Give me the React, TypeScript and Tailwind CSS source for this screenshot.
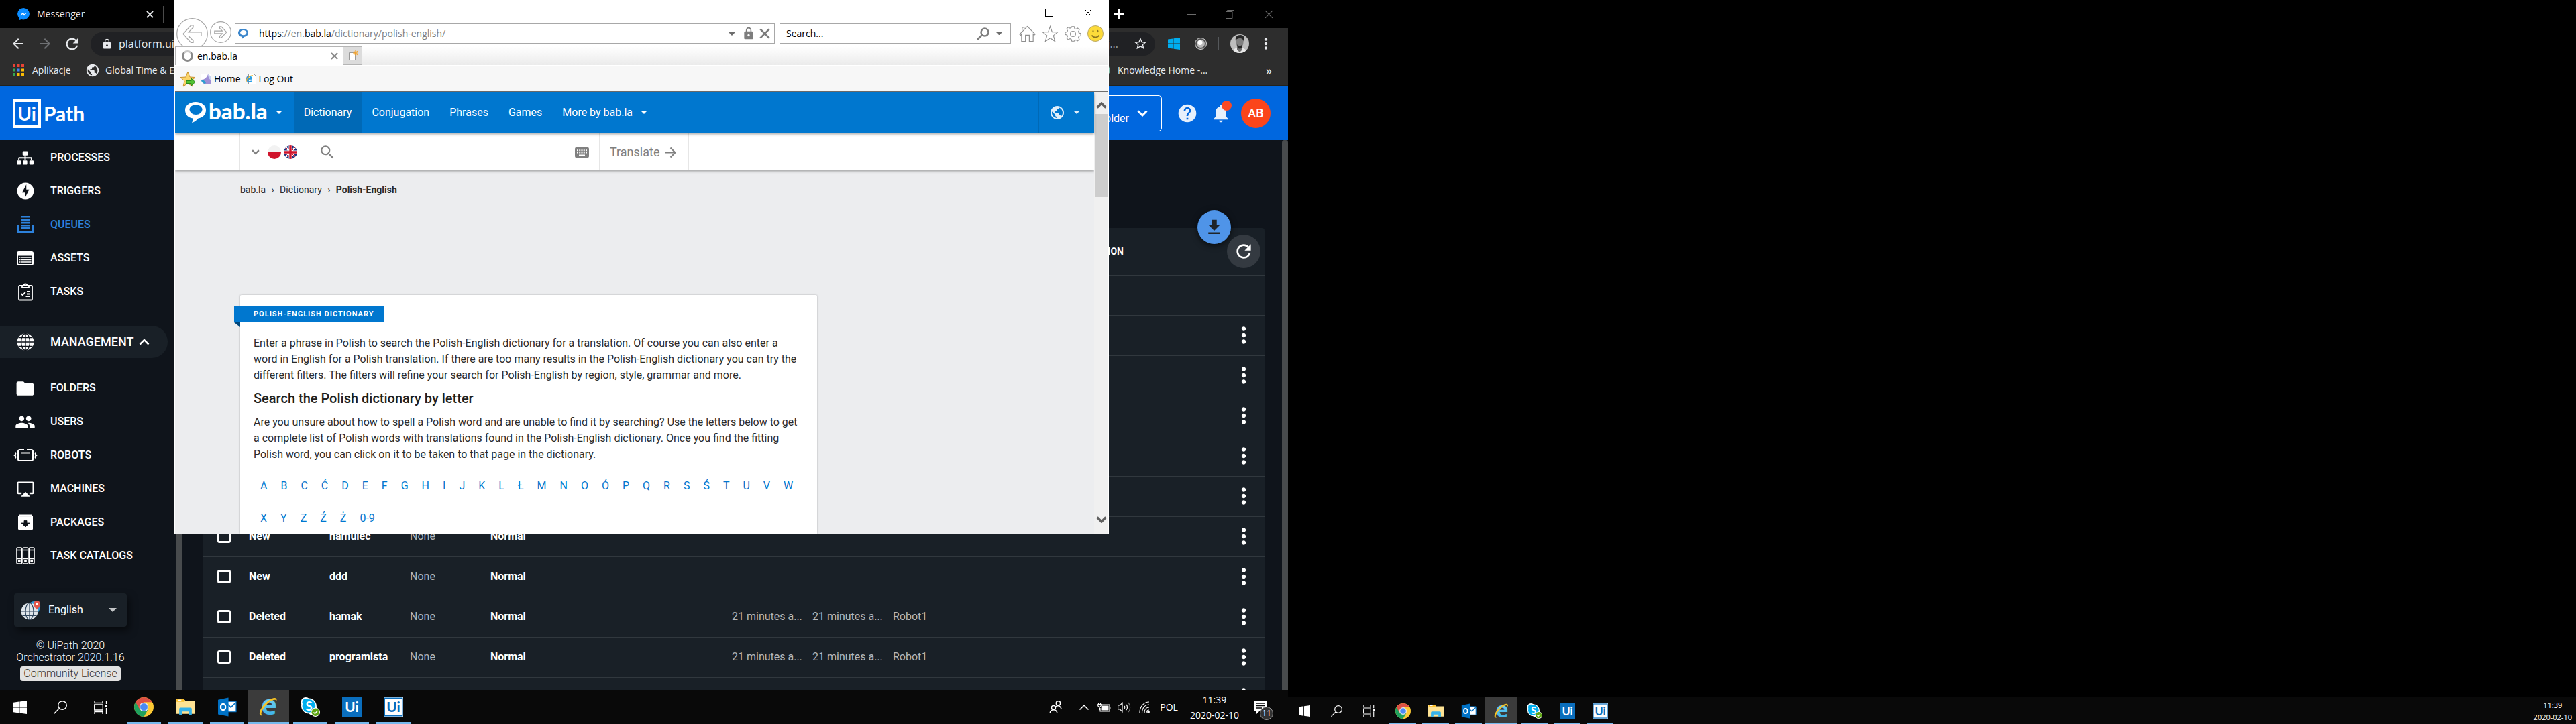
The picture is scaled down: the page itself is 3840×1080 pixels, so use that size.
import React from "react";
import type { ReactNode } from "react";
import {
  MdAirplay,
  MdArrowBack,
  MdArrowForward,
  MdFileDownload,
  MdFolder,
  MdHelp,
  MdLock,
  MdMoreVert,
  MdNotifications,
  MdOfflineBolt,
  MdPeople,
  MdPublic,
  MdRefresh,
  MdSearch,
  MdStarBorder,
} from "react-icons/md";
import { FaSitemap } from "react-icons/fa";

const SEGOE = "font-['Open_Sans','Noto_Sans',sans-serif]";
const ROBOTO = "font-['Roboto',sans-serif]";

/* ---------- icons ---------- */

function Chevron({ className, up, w = 3 }: { className: string; up?: boolean; w?: number }) {
  return (
    <svg viewBox="0 0 16 10" className={className} fill="none" stroke="currentColor" strokeWidth={w}>
      <path d={up ? "M1.5 8.5 8 2l6.5 6.5" : "M1.5 1.5 8 8l6.5-6.5"} />
    </svg>
  );
}

function Caret({ className }: { className: string }) {
  return (
    <svg viewBox="0 0 12 6" className={className} fill="currentColor">
      <path d="M0 0h12L6 6z" />
    </svg>
  );
}

function Cross({ className, w = 2 }: { className: string; w?: number }) {
  return (
    <svg viewBox="0 0 12 12" className={className} fill="none" stroke="currentColor" strokeWidth={w}>
      <path d="M1 1l10 10M11 1 1 11" />
    </svg>
  );
}

function QueueIcon() {
  return (
    <svg viewBox="0 0 28 28" className="size-7" fill="currentColor">
      <path d="M7 1h14v2.6H7zM7 5.4h14V8H7zM7 9.8h14v2.6H7zM7 14h14v2.6H7zM7 18h14v2.6H7z" />
      <path d="M1 15h3v9h20v-9h3v12H1z" />
    </svg>
  );
}

function AssetIcon() {
  return (
    <svg viewBox="0 0 25 21" className="w-[25px]" fill="none" stroke="currentColor">
      <rect x="1" y="1" width="23" height="19" rx="2" strokeWidth="2" />
      <path d="M1 1.5h23V6H1z" fill="currentColor" />
      <path d="M3.5 9h2M7 9h14.500M3.500 12.500h2M7 12.500h14.500M3.500 16h2M7 16h14.500" strokeWidth="1.500" />
    </svg>
  );
}

function TaskIcon() {
  return (
    <svg viewBox="0 0 24 27" className="w-6" fill="none" stroke="currentColor" strokeWidth="1.8">
      <rect x="2" y="4" width="20" height="21.500" rx="1.500" />
      <path d="M7 7h10V4h-2.500a2.500 2.500 0 0 0-5 0H7z" />
      <path d="M5.500 16l2.200 2.200L12 13.500M14 13h5M14 16.500h5M12.500 20H19" />
    </svg>
  );
}

function GlobeGrid({ className, fill = "#fff", line = "#0f141b" }: { className: string; fill?: string; line?: string }) {
  return (
    <svg viewBox="0 0 26 26" className={className} fill="none" stroke={line} strokeWidth="1.300">
      <circle cx="13" cy="13" r="12.500" fill={fill} stroke="none" />
      <ellipse cx="13" cy="13" rx="6.500" ry="12.500" />
      <path d="M13 0v26M0 13h26M2.500 6.500h21M2.500 19.500h21" />
    </svg>
  );
}

function RobotIcon() {
  return (
    <svg viewBox="0 0 36 20" className="w-9" fill="none" stroke="currentColor" strokeWidth="2.200">
      <path d="M16 2h-6.500A2.500 2.500 0 0 0 7 4.500v11A2.500 2.500 0 0 0 9.500 18h17a2.500 2.500 0 0 0 2.500-2.500v-11A2.500 2.500 0 0 0 26.500 2H20" />
      <path d="M12 6.500h12M4 6c-1 .5-.7 2-1.100 3-.2.600-.9 1-.9 1s.700.400.900 1c.400 1 .1 2.500 1.100 3M32 6c1 .5.7 2 1.100 3 .2.600.9 1 .9 1s-.7.400-.9 1c-.400 1-.1 2.500-1.100 3" />
    </svg>
  );
}

function PackageIcon() {
  return (
    <svg viewBox="0 0 24 24" className="size-6">
      <path d="M3 .5h18l2 2.500v18.500A2 2 0 0 1 21 23.500H3a2 2 0 0 1-2-2V3z" fill="#fff" />
      <path d="M3.500 2.600h17M10 9.500h4v3.500h4l-6 6-6-6h4z" fill="#0f141b" stroke="#0f141b" strokeWidth=".8" />
    </svg>
  );
}

function CatalogIcon() {
  return (
    <svg viewBox="0 0 28 26" className="w-7" fill="none" stroke="currentColor" strokeWidth="1.600">
      {[1, 10.200, 19.400].map((x) => (
        <g key={x}>
          <rect x={x} y="1" width="7.600" height="24" rx="1.500" />
          <path d={`M${x} 4.500h7.600M${x} 17.500h7.600`} />
          <circle cx={x + 3.800} cy="21" r="1.200" fill="currentColor" />
        </g>
      ))}
    </svg>
  );
}

function TravelGlobe() {
  return (
    <svg viewBox="0 0 30 30" className="size-[30px]">
      <path d="M13 5C20-1 30 2 29 10c-1 7-4 10-7 12z" fill="#2a9bdc" />
      <circle cx="13" cy="17" r="12.500" fill="#dfe5ea" />
      <g fill="none" stroke="#31475e" strokeWidth="1.200">
        <ellipse cx="13" cy="17" rx="6" ry="12.500" />
        <path d="M13 4.500v25M.5 17h25M2.500 10.500h21M2.500 23.500h21" />
      </g>
      <path d="M24 1a5 5 0 0 1 5 5c0 4-5 8.500-5 8.500S19 10 19 6a5 5 0 0 1 5-5z" fill="#e2574c" />
      <circle cx="24" cy="6" r="2" fill="#fff" />
    </svg>
  );
}

function WindowsLogo({ className }: { className: string }) {
  return (
    <svg viewBox="0 0 20 20" className={className} fill="currentColor">
      <path d="M0 2.800 8.400 1.600V9.500H0zM9.400 1.500 20 0v9.500H9.400zM0 10.500h8.400v7.900L0 17.200zM9.400 10.500H20V20L9.400 18.500z" />
    </svg>
  );
}

function SearchLoop({ className }: { className: string }) {
  return (
    <svg viewBox="0 0 20 20" className={className} fill="none" stroke="currentColor" strokeWidth="1.400">
      <circle cx="13" cy="7" r="6.300" />
      <path d="M8.500 11.500.5 19.500" />
    </svg>
  );
}

function TaskView({ className }: { className: string }) {
  return (
    <svg viewBox="0 0 20 20" className={className} fill="none" stroke="currentColor" strokeWidth="1.300">
      <path d="M1 0v3.500h12V0M1 20v-3.500h12V20M.7 6h12.600v8H.7zM18.500 0v5M18.500 11v9" />
      <path d="M17 6h3v3.500h-3z" fill="currentColor" stroke="none" />
    </svg>
  );
}

function ChromeLogo({ className }: { className: string }) {
  return (
    <svg viewBox="0 0 28 28" className={className}>
      <circle cx="14" cy="14" r="14" fill="#fcc934" />
      <path d="M14 14 1.900 7A14 14 0 0 0 14 28l6-10.500z" fill="#1fa15d" />
      <path d="M1.900 7A14 14 0 0 1 26.100 7H14L8 17.500z" fill="#dd5144" />
      <circle cx="14" cy="14" r="6.600" fill="#f1f1f1" />
      <circle cx="14" cy="14" r="5.300" fill="#4a8af4" />
    </svg>
  );
}

function ExplorerLogo({ className }: { className: string }) {
  return (
    <svg viewBox="0 0 28 28" className={className}>
      <path d="M0 3h12l2 2.500h14V24H0z" fill="#ffe394" />
      <path d="M1 2.500h10.500L14 5l-2 1.500H1z" fill="#fbc02d" />
      <path d="M3 3.500h5v1.500H3z" fill="#fff" />
      <path d="M5 25.500V17a2 2 0 0 1 2-2h14a2 2 0 0 1 2 2v8.500h-4.500v-5h-9v5z" fill="#35b2ea" />
    </svg>
  );
}

function OutlookLogo({ className }: { className: string }) {
  return (
    <svg viewBox="0 0 28 28" className={className}>
      <path d="M14 6h13v15H14z" fill="#fff" stroke="#0072c6" strokeWidth="1.200" />
      <path d="M15.500 10.500l4 4 7-7" fill="none" stroke="#0072c6" strokeWidth="1.600" />
      <path d="M1 3.500 16 .5v27L1 24.500z" fill="#0072c6" />
      <ellipse cx="8.300" cy="14" rx="3.500" ry="4.500" fill="none" stroke="#fff" strokeWidth="2.200" />
    </svg>
  );
}

function IeLogo({ className }: { className: string }) {
  return (
    <svg viewBox="0 0 28 28" overflow="visible" className={className}>
      <defs>
        <linearGradient id="ie-blue" x1="0" y1="0" x2="0" y2="1">
          <stop offset="0" stopColor="#8fe3fb" />
          <stop offset="1" stopColor="#29a5e3" />
        </linearGradient>
      </defs>
      <text x="3" y="25.500" fontSize="39" fontWeight="700" fontFamily="Open Sans" fill="url(#ie-blue)">e</text>
      <path d="M5 26C-1 28 0 20 5 13.500 11 5 22-1.500 25 2c1 1.200.6 3-.2 4.600.1-1.600 0-2.600-1.300-2.900C19 3 11 9 6.500 16 3 21.500 2.500 25 5 26z" fill="#f7c325" />
    </svg>
  );
}

function SkypeLogo({ className }: { className: string }) {
  return (
    <svg viewBox="0 0 28 28" className={className}>
      <circle cx="7.500" cy="7" r="7" fill="#fff" />
      <circle cx="17" cy="18" r="7.500" fill="#fff" />
      <circle cx="12" cy="12.500" r="11" fill="#fff" />
      <circle cx="12" cy="12.500" r="9.500" fill="#00aff0" />
      <circle cx="7.500" cy="7" r="5" fill="#00aff0" />
      <text x="12.200" y="19" fontSize="18" fontWeight="700" fontFamily="Lato" textAnchor="middle" fill="#fff">S</text>
      <circle cx="21.500" cy="21.500" r="6.500" fill="#fff" />
      <circle cx="21.500" cy="21.500" r="5.600" fill="#5fa614" />
      <path d="M18.800 21.700l1.900 1.900 3.500-3.800" fill="none" stroke="#fff" strokeWidth="1.400" />
    </svg>
  );
}

function UiLogo({ className, light }: { className: string; light?: boolean }) {
  return (
    <svg viewBox="0 0 28 28" className={className}>
      <rect width="28" height="28" fill={light ? "#fff" : "#0a6ebd"} />
      {light && <rect x="1.200" y="1.200" width="25.600" height="25.600" fill="none" stroke="#0a6ebd" strokeWidth="1.500" />}
      <text x="14" y="21.500" fontSize="20" fontWeight="700" fontFamily="Lato" textAnchor="middle" fill={light ? "#0a6ebd" : "#fff"}>Ui</text>
    </svg>
  );
}

function Bubble({ className, hole }: { className: string; hole: string }) {
  return (
    <svg viewBox="0 0 31 31" className={className}>
      <path d="M15.500 0C24.500 0 31 5 31 12s-5 11.500-11.500 12.500C17 27 15 29.500 10 31c1-2 1.700-4 1.500-6.500C5 24 0 19 0 12S7 0 15.500 0z" fill="currentColor" />
      <ellipse cx="16" cy="11.500" rx="9.500" ry="7.500" fill={hole} />
    </svg>
  );
}

function Flag({ kind }: { kind: "pl" | "uk" }) {
  return (
    <svg viewBox="0 0 20 20" className="size-5">
      <clipPath id={`flag-${kind}`}>
        <circle cx="10" cy="10" r="10" />
      </clipPath>
      <g clipPath={`url(#flag-${kind})`}>
        {kind === "pl" ? (
          <>
            <path d="M0 0h20v10H0z" fill="#f2f2f2" />
            <path d="M0 10h20v10H0z" fill="#d0142c" />
          </>
        ) : (
          <>
            <path d="M0 0h20v20H0z" fill="#1c2f7c" />
            <path d="M0 0l20 20M20 0 0 20" stroke="#fff" strokeWidth="2.500" />
            <path d="M0 0l20 20M20 0 0 20" stroke="#d0142c" strokeWidth="1" />
            <path d="M10 0v20M0 10h20" stroke="#fff" strokeWidth="5" />
            <path d="M10 0v20M0 10h20" stroke="#d0142c" strokeWidth="3.400" />
          </>
        )}
      </g>
    </svg>
  );
}

/* ---------- Chrome window with Orchestrator ---------- */

const ICON = "size-[26px]";

const mainMenu: { label: string; icon: ReactNode; active?: boolean }[] = [
  { label: "PROCESSES", icon: <FaSitemap className="size-[25px]" /> },
  { label: "TRIGGERS", icon: <MdOfflineBolt className="size-[30px]" /> },
  { label: "QUEUES", icon: <QueueIcon />, active: true },
  { label: "ASSETS", icon: <AssetIcon /> },
  { label: "TASKS", icon: <TaskIcon /> },
];

const managementMenu: { label: string; icon: ReactNode; active?: boolean }[] = [
  { label: "FOLDERS", icon: <MdFolder className="size-[31px]" /> },
  { label: "USERS", icon: <MdPeople className="size-[31px]" /> },
  { label: "ROBOTS", icon: <RobotIcon /> },
  { label: "MACHINES", icon: <MdAirplay className="size-[28px]" /> },
  { label: "PACKAGES", icon: <PackageIcon /> },
  { label: "TASK CATALOGS", icon: <CatalogIcon /> },
];

function MenuList({ items }: { items: typeof mainMenu }) {
  return (
    <ul>
      {items.map((m) => (
        <li key={m.label}>
          <a href="#" className={`flex h-[50px] items-center text-base font-medium ${m.active ? "text-[#2d82dc]" : "text-white"}`}>
            <span className="flex w-[75px] justify-center">{m.icon}</span>
            {m.label}
          </a>
        </li>
      ))}
    </ul>
  );
}

function Sidebar() {
  return (
    <aside className="w-[262px] shrink-0">
      <nav className="pt-px">
        <MenuList items={mainMenu} />
        <button className="mt-[26px] flex h-12 w-[250px] items-center rounded-r-full bg-[#192027] text-lg font-medium text-white">
          <span className="flex w-[75px] justify-center">
            <GlobeGrid className={ICON} />
          </span>
          MANAGEMENT
          <Chevron className="ml-2 w-4" up w={2.500} />
        </button>
        <div className="mt-5">
          <MenuList items={managementMenu} />
        </div>
      </nav>
      <div className="ml-[21px] w-[168px] text-center text-base leading-[18px] font-light text-white">
        <div className="mt-[31px] flex h-[50px] items-center rounded-[4px] bg-[#192027] pr-[15px] pl-[10px] shadow-[4px_6px_12px_#0008]">
          <TravelGlobe />
          <select aria-label="Language" className="ml-[11px] flex-1 appearance-none bg-transparent font-normal outline-none">
            <option>English</option>
          </select>
          <Caret className="w-3 text-[#c2c4c6]" />
        </div>
        <p className="mt-[19px]">© UiPath 2020</p>
        <p className="-mx-3">Orchestrator 2020.1.16</p>
        <p className="mx-auto mt-1 w-[150px] rounded-[4px] bg-[#e2e2e2] leading-[22px] whitespace-nowrap text-[#333]">Community License</p>
      </div>
    </aside>
  );
}

const dataRows: string[][] = [
  ["", "", "", "", "", "", ""],
  ["", "", "", "", "", "", ""],
  ["", "", "", "", "", "", ""],
  ["", "", "", "", "", "", ""],
  ["", "", "", "", "", "", ""],
  ["New", "hamulec", "None", "Normal", "", "", ""],
  ["New", "ddd", "None", "Normal", "", "", ""],
  ["Deleted", "hamak", "None", "Normal", "21 minutes a...", "21 minutes a...", "Robot1"],
  ["Deleted", "programista", "None", "Normal", "21 minutes a...", "21 minutes a...", "Robot1"],
  ["", "", "", "", "", "", ""],
];

function QueueTable() {
  return (
    <div className="relative rounded-t-[4px] bg-[#192027]">
      <table className="w-full table-fixed border-collapse text-base whitespace-nowrap text-[#b4b7ba]">
        <colgroup>
          <col className="w-[68px]" />
          <col className="w-[120px]" />
          <col className="w-[120px]" />
          <col className="w-[120px]" />
          <col className="w-[360px]" />
          <col className="w-[120px]" />
          <col className="w-[120px]" />
          <col className="w-[120px]" />
          <col className="w-[224px]" />
          <col />
          <col className="w-[62px]" />
        </colgroup>
        <thead>
          <tr className="h-[70px] border-b border-[#31383e]">
            <th colSpan={8} />
            <th className="text-right text-sm font-bold text-white">EXCEPTION</th>
            <th colSpan={2} />
          </tr>
        </thead>
        <tbody>
          <tr className="h-[60px] border-b border-[#31383e]">
            <td colSpan={11} />
          </tr>
          {dataRows.map((r, i) => (
            <tr key={i} className="h-[60px] border-b border-[#31383e]">
              <td className="pl-[21px]">
                <input
                  type="checkbox"
                  aria-label="Select row"
                  className="block size-5 appearance-none rounded-[3px] border-[3px] border-white"
                />
              </td>
              {r.map((c, j) => (
                <td key={j} className={j < 4 && j !== 2 ? "font-bold text-white" : ""}>
                  {c}
                </td>
              ))}
              <td />
              <td />
              <td className="text-white">
                <button aria-label="More actions" className="mx-auto block">
                  <MdMoreVert className="size-[38px]" />
                </button>
              </td>
            </tr>
          ))}
        </tbody>
      </table>
      <button aria-label="Export" className="absolute -top-[26px] right-[50px] flex size-[50px] items-center justify-center rounded-full bg-[#4f94e8] text-[#1f2429] shadow-[0_2px_10px_#000a]">
        <MdFileDownload className="size-[30px]" />
      </button>
      <button aria-label="Refresh" className="absolute top-[10px] right-[6px] flex size-[50px] items-center justify-center rounded-full bg-[#343a41] text-white">
        <MdRefresh className="size-8" />
      </button>
    </div>
  );
}

function ChromeWindow() {
  return (
    <section className="flex min-h-0 flex-1 flex-col overflow-hidden bg-[#0f141b]">
      <div className={`flex h-[42px] shrink-0 items-center bg-black pr-[22px] pl-[26px] text-sm text-[#e8eaed] ${SEGOE}`}>
        <svg viewBox="0 0 18 18" className="mr-[11px] size-[18px]">
          <path d="M9 0a9 9 0 0 1 9 8.700A9 9 0 0 1 9 17.400c-1 0-2-.2-3-.5L3 18v-2.800A8.700 8.700 0 0 1 0 8.700 9 9 0 0 1 9 0z" fill="#0a8cff" />
          <path d="M3.500 11.500 8 6.800l2.300 2.200 4.200-2.300-4.500 4.700-2.300-2.200z" fill="#fff" />
        </svg>
        Messenger
        <span className="flex w-[118px] justify-end">
          <button aria-label="Close tab" className="mr-[14px] ml-auto">
            <Cross className="size-[11px]" />
          </button>
          <span className="h-[25px] w-px bg-[#4a4a4a]" />
        </span>
        <span className="ml-auto flex items-center text-[#6b6b6b]">
          <button aria-label="New tab" className="mr-[95px] text-white">
            <svg viewBox="0 0 14 14" className="size-[14px]" stroke="currentColor" strokeWidth="2.500">
              <path d="M7 0v14M0 7h14" />
            </svg>
          </button>
          <button aria-label="Minimize" className="mr-11 h-px w-[13px] bg-[#6b6b6b]" />
          <button aria-label="Restore" className="mr-[45px]">
            <svg viewBox="0 0 13 13" className="size-[13px]" fill="none" stroke="currentColor">
              <path d="M.5 2.500h9.500v10H.5zM2.500 2.500v-2h10v10H10" />
            </svg>
          </button>
          <button aria-label="Close">
            <Cross className="size-[13px]" w={1} />
          </button>
        </span>
      </div>
      <div className={`flex h-[87px] shrink-0 flex-col border-b-2 border-[#23221c] bg-[#2d2d2d] text-sm text-[#e8eaed] ${SEGOE}`}>
        <div className="flex h-[46px] items-center pr-5 pl-[15px]">
          <button aria-label="Back"><MdArrowBack className="size-6" /></button>
          <button aria-label="Forward" className="ml-4 text-[#6f7174]"><MdArrowForward className="size-6" /></button>
          <button aria-label="Reload" className="ml-[15px]"><MdRefresh className="size-[27px]" /></button>
          <div className="ml-[14px] flex h-[35px] flex-1 items-center rounded-full bg-[#202124] pr-[11px] pl-4">
            <MdLock className="mr-[9px] size-[17px]" />
            <span className="text-base">platform.uipath.com</span>
            <span className="ml-auto text-base text-[#9aa0a6]">Aj...</span>
            <MdStarBorder className="ml-[22px] size-[22px]" />
          </div>
          <WindowsLogo className="ml-[19px] size-[18px] text-[#00adef]" />
          <svg viewBox="0 0 18 18" className="ml-[22px] size-[18px]">
            <circle cx="9" cy="9" r="8.500" fill="#555" stroke="#ddd" />
            <circle cx="9" cy="9" r="6" fill="#bbb" />
            <circle cx="8" cy="7.500" r="3.500" fill="#fff" />
          </svg>
          <span className="mx-[17px] h-5 w-px bg-[#55585b]" />
          <svg viewBox="0 0 28 28" className="size-7">
            <clipPath id="avatar"><circle cx="14" cy="14" r="14" /></clipPath>
            <g clipPath="url(#avatar)">
              <path d="M0 0h28v28H0z" fill="#bdbdbd" />
              <path d="M3 28c0-6 5-8 11-8s11 3 11 8z" fill="#e8e8e8" />
              <path d="M10 17h8v6l-4 4-4-4z" fill="#6e6e6e" />
              <ellipse cx="14" cy="12" rx="5.500" ry="8" fill="#808080" />
              <path d="M8 10C7 4 10 1 15 1s7 4 5 10c-1-4-3-5-6-5s-5 1-6 4zM10 15c2 3 6 3 8 0l-1 5c-2 2-4 2-6 0z" fill="#262626" />
            </g>
          </svg>
          <button aria-label="Menu" className="ml-3"><MdMoreVert className="size-[26px]" /></button>
        </div>
        <div className="flex h-[33px] items-center pr-6 pl-[19px]">
          <svg viewBox="0 0 17 17" className="size-[17px]">
            {["#ea4335", "#ea4335", "#ea4335", "#34a853", "#4285f4", "#fbbc04", "#34a853", "#fbbc04", "#fbbc04"].map((c, i) => (
              <rect key={i} x={(i % 3) * 6.500} y={Math.floor(i / 3) * 6.500} width="4" height="4" fill={c} />
            ))}
          </svg>
          <span className="ml-3 w-[79px]">Aplikacje</span>
          <MdPublic className="size-[22px]" />
          <span className="ml-2">Global Time &amp; Expense</span>
          <span className="ml-auto flex w-[230px] items-center">
            <span className="mr-[11px] -ml-[27px] size-4 shrink-0 rounded-full bg-[#7fb8a5]" />
            Knowledge Home -...
            <span className="ml-auto text-lg">»</span>
          </span>
        </div>
      </div>
      <header className={`flex h-20 shrink-0 items-center bg-[#0067df] pr-[26px] pl-[19px] text-white ${ROBOTO}`}>
        <a href="#" className="flex items-center font-['Lato',sans-serif] text-[30px] leading-none font-bold">
          <span className="flex h-[43px] w-[42px] items-center justify-center border-4 border-white text-[28px]">Ui</span>
          <span className="ml-1">Path</span>
        </a>
        <button className="ml-auto flex h-[54px] w-[200px] items-center justify-end rounded-[5px] border border-white pr-5 text-base">
          <span className="mt-4">Folder</span>
          <Chevron className="ml-3 w-4" />
        </button>
        <button aria-label="Help" className="ml-[22px] text-[#e6f0fc]"><MdHelp className="size-8" /></button>
        <button aria-label="Notifications" className="relative ml-[18px] text-[#e6f0fc]">
          <MdNotifications className="size-8" />
          <span className="absolute -top-[3px] right-0 size-[15px] rounded-full bg-[#fb4a24]" />
        </button>
        <button className="ml-[14px] size-11 rounded-full bg-[#fb451a] text-lg font-medium">AB</button>
      </header>
      <div className={`flex min-h-0 flex-1 ${ROBOTO}`}>
        <Sidebar />
        <div className="w-[10px] shrink-0 rounded-b-[4px] bg-[#484b4d]" />
        <main className="min-w-0 flex-1 pt-[131px] pr-[26px] pl-[31px]">
          <QueueTable />
        </main>
        <div className="w-[9px] shrink-0 rounded-t-[4px] bg-[#484b4d]" />
      </div>
    </section>
  );
}

/* ---------- Internet Explorer window ---------- */

const letters = "A B C Ć D E F G H I J K L Ł M N O Ó P Q R S Ś T U V W X Y Z Ź Ż 0-9".split(" ");

function IeChrome() {
  return (
    <div className={`bg-white text-sm text-black ${SEGOE}`}>
      <div className="flex h-[27px] items-end justify-end gap-[46px] pr-6 pb-[2px]">
        <button aria-label="Minimize" className="mb-[5px] h-px w-3 bg-black" />
        <button aria-label="Maximize" className="size-3 border border-black" />
        <button aria-label="Close"><Cross className="size-3" w={1} /></button>
      </div>
      <div className="flex h-[42px] items-center pr-[7px] pl-[2px] text-[#808080]">
        <button aria-label="Back" className="-mb-1">
          <svg viewBox="0 0 47 47" className="size-[47px]" fill="none" stroke="#a6a6a6" strokeWidth="1.200">
            <circle cx="23.500" cy="23.500" r="22.800" />
            <path d="M10 23.500 21.500 11h3.500v3l-7 7h19v5.500H18l7 7v3h-3.500z" />
          </svg>
        </button>
        <button aria-label="Forward" className="ml-[3px]">
          <svg viewBox="0 0 33 33" className="size-8" fill="none" stroke="#a6a6a6" strokeWidth="1.200">
            <circle cx="16.500" cy="16.500" r="15.800" />
            <path d="M25.500 16.500 17.500 8H15v2.500l4 4H7v4h12l-4 4V25h2.500z" />
          </svg>
        </button>
        <div className="mt-1 ml-[5px] flex h-[30px] flex-1 items-center border border-[#a8a8a8] pr-[6px] pl-1">
          <Bubble className="size-[15px] text-[#3b86cc]" hole="#fff" />
          <span className="ml-4 flex-1">
            <span className="text-black">https</span>://en.<span className="text-black">bab.la</span>/dictionary/polish-english/
          </span>
          <Caret className="w-[10px] text-[#6d6d6d]" />
          <MdLock className="ml-[10px] size-5 text-[#7d7d7d]" />
          <Cross className="ml-[6px] size-4 text-[#7d7d7d]" w={2} />
        </div>
        <div className="mt-1 ml-[7px] flex h-[30px] w-[345px] items-center border border-[#a8a8a8] pr-3 pl-[9px]">
          <input aria-label="Search" placeholder="Search..." className="min-w-0 flex-1 bg-transparent outline-none placeholder:text-black" />
          <svg viewBox="0 0 19 19" className="size-[19px]" fill="none" stroke="#7d7d7d" strokeWidth="2.500">
            <circle cx="12" cy="7" r="5.500" />
            <path d="M8 11 1 18" />
          </svg>
          <Caret className="ml-[10px] w-[9px] text-[#6d6d6d]" />
        </div>
        <div className="mt-1 ml-3 flex items-center gap-[9px]">
          <svg viewBox="0 0 26 26" className="size-[25px]" fill="none" stroke="#8f8f8f" strokeWidth="1.200">
            <path d="M13 1.500 1 13.500 2.500 15 4 13.500V24.500h6V15h6v9.500h6v-11L23.500 15l1.500-1.500-6-6zM5 7V3h3v2" />
          </svg>
          <svg viewBox="0 0 26 26" className="size-[25px]" fill="none" stroke="#8f8f8f" strokeWidth="1.200">
            <path d="M13 1.500 16 10h9l-7 5.500 2.500 9-7.500-5-7.500 5 2.500-9L1 10h9z" />
          </svg>
          <svg viewBox="-1 0 28 26" className="size-[25px]" fill="none" stroke="#8f8f8f" strokeWidth="1.200">
            <circle cx="13" cy="13" r="4.500" />
            <path d="M11 1h4l.8 3.200 2.200.9 2.900-1.600 2.700 2.700-1.600 2.900.9 2.200 3.100.8v4l-3.100.7-.9 2.200 1.600 2.900-2.700 2.700-2.900-1.600-2.200.9L15 25h-4l-.8-3.100L8 21l-2.900 1.600-2.700-2.700L4 17l-.9-2.200L0 14v-3.500l3.100-.7L4 7.600 2.400 4.700 5.100 2 8 3.600l2.200-.9z" />
          </svg>
          <svg viewBox="0 0 24 24" className="size-6">
            <circle cx="12" cy="12" r="11.500" fill="#fddb3a" stroke="#b9a86a" />
            <ellipse cx="8.500" cy="8.500" rx="1" ry="1.700" fill="#8a7420" />
            <ellipse cx="15.500" cy="8.500" rx="1" ry="1.700" fill="#8a7420" />
            <path d="M6.500 14.500c2.500 4 8.500 4 11 0" fill="none" stroke="#8a7420" strokeWidth="1.500" />
          </svg>
        </div>
      </div>
      <div className="flex h-[30px] items-stretch border-b-2 border-white bg-linear-to-b from-white to-[#ebebeb]">
        <div className="relative flex w-[251px] items-center border border-b-0 border-[#b5b5b5] bg-white pr-[7px] pl-[9px]">
          <span className="size-[17px] rounded-full border-[3px] border-[#8a8a8a] border-t-[#c9c9c9]" />
          <span className="ml-[6px] flex-1">en.bab.la</span>
          <button aria-label="Close tab"><Cross className="size-[11px] text-[#8a8a8a]" w={2.200} /></button>
        </div>
        <button aria-label="New tab" className="flex w-7 items-center justify-center border border-l-0 border-[#b5b5b5] bg-[#dcdcdc]">
          <svg viewBox="0 0 16 16" className="size-4">
            <path d="M2.500 3.500h9v11h-9z" fill="#fff" stroke="#999" />
            <path d="M12 0v8M8 4h8M9.200 1.200l5.600 5.600M14.800 1.200 9.200 6.800" stroke="#f4a32c" strokeWidth="1.200" />
          </svg>
        </button>
      </div>
      <div className="flex h-[38px] items-center border-b border-[#6e6e6e] bg-[#f7f7f7] pl-[7px]">
        <svg viewBox="0 0 24 24" className="size-6">
          <path d="M12 1l3 8 8 .5-6 5.500 2 8-7-4.500L5 23l2-8-6-5.500L9 9z" fill="#fbd468" stroke="#c8912b" />
          <path d="M10 14.500h7V11l6 5.500-6 5.500v-3.500h-7z" fill="#52c234" stroke="#2a8a1e" />
        </svg>
        <svg viewBox="0 0 16 16" className="ml-[7px] size-4">
          <path d="M0 0h16v16H0z" fill="#fff" />
          <path d="M1 9c5 0 8-3 10-8l4 3v11H5c-2-1-4-3-4-6z" fill="#9f8fd6" />
          <path d="M1 9c3 0 5 1 7 5l-2 1c-3-1-5-3-5-6z" fill="#2f9fd0" />
          <path d="M11 1l4 3v6c-2-2-4-5-4-9z" fill="#c7d4f2" />
        </svg>
        <a href="#" className="ml-1">Home</a>
        <svg viewBox="0 0 16 16" overflow="visible" className="ml-[7px] size-4">
          <path d="M4.500.5h8l3 3v12h-11z" fill="#fff" stroke="#999" />
          <text x="0" y="12.500" fontSize="17" fontWeight="700" fontFamily="Open Sans" fill="#2b9be0">e</text>
          <path d="M1 13C0 9 6 2 11 3" fill="none" stroke="#f0b323" strokeWidth="1.300" />
        </svg>
        <a href="#" className="ml-1">Log Out</a>
      </div>
    </div>
  );
}

function BablaPage() {
  return (
    <div className={`flex min-w-0 flex-1 flex-col bg-[#ecedef] text-[#2b2b2b] ${ROBOTO}`}>
      <nav className="relative flex h-[61px] items-stretch bg-[#0077cf] pl-[15px] text-base text-white shadow-[0_2px_4px_#0006]">
        <a href="#" className="flex items-center">
          <Bubble className="size-[31px] text-white" hole="#0077cf" />
          <span className="mb-1 ml-1 font-['Lato',sans-serif] text-[33px] leading-none font-black">bab.la</span>
          <Caret className="ml-3 w-[10px]" />
        </a>
        <a href="#" className="ml-[17px] flex items-center bg-[#0069b6] px-[15px]">Dictionary</a>
        <a href="#" className="flex items-center px-[15px]">Conjugation</a>
        <a href="#" className="flex items-center px-[15px]">Phrases</a>
        <a href="#" className="flex items-center px-[15px]">Games</a>
        <a href="#" className="flex items-center px-[15px]">
          More by bab.la
          <Caret className="ml-3 w-[10px]" />
        </a>
        <button aria-label="Site language" className="ml-auto flex w-[83px] items-center border-l border-[#0069b6] pl-[15px] text-[#e0eefa]">
          <MdPublic className="size-6" />
          <Caret className="ml-3 w-[10px]" />
        </button>
      </nav>
      <form className="flex h-14 items-stretch bg-white pl-24 text-[#808080] shadow-[0_1px_4px_#0006]">
        <button type="button" aria-label="Languages" className="flex w-[104px] items-center gap-1 border-x border-[#e6e6e6] pt-[2px] pl-[17px]">
          <Chevron className="mr-2 w-3" />
          <Flag kind="pl" />
          <Flag kind="uk" />
        </button>
        <label className="flex w-[379px] items-center pt-[2px] pl-[14px]">
          <MdSearch className="size-[26px]" />
          <input aria-label="Search term" className="min-w-0 flex-1 bg-transparent outline-none" />
        </label>
        <button type="button" aria-label="Keyboard" className="flex w-[53px] items-center justify-center border-l border-[#e6e6e6] pt-[2px]">
          <svg viewBox="0 0 21 15" className="w-[21px]">
            <rect width="21" height="15" rx="2" fill="#808080" />
            <path d="M3 4.200h15M3 7.400h15" stroke="#fff" strokeWidth="2" strokeDasharray="2 1.250" />
            <path d="M6 11.500h9" stroke="#fff" strokeWidth="2" />
          </svg>
        </button>
        <button type="button" className="flex w-[134px] items-center border-x border-[#e6e6e6] pt-[2px] pl-[15px] text-lg">
          Translate
          <svg viewBox="0 0 17 17" className="ml-2 size-[17px]" fill="none" stroke="currentColor" strokeWidth="2">
            <path d="M0 8.500h15.500M8.500 1.500l7 7-7 7" />
          </svg>
        </button>
      </form>
      <ol className="flex h-[58px] items-center pl-[97px] text-sm">
        <li><a href="#">bab.la</a></li>
        <li aria-hidden="true" className="w-[21px] text-center">›</li>
        <li><a href="#">Dictionary</a></li>
        <li aria-hidden="true" className="w-[21px] text-center">›</li>
        <li className="font-bold">Polish-English</li>
      </ol>
      <article className="mt-32 ml-[97px] w-[860px] flex-1 rounded-t-[2px] bg-white pt-[17px] pl-5 text-base shadow-[0_0_3px_#0004]">
        <h1 className="relative -ml-[29px] flex h-6 w-[223px] items-center bg-[#0077cf] pl-[29px] text-[11px] font-bold tracking-[1px] whitespace-nowrap text-white">
          POLISH-ENGLISH DICTIONARY
          <svg viewBox="0 0 9 7" className="absolute top-6 left-0 w-[9px]">
            <path d="M0 0h9v7z" fill="#00477c" />
          </svg>
        </h1>
        <p className="mt-[19px] w-[820px]">
          Enter a phrase in Polish to search the Polish-English dictionary for a translation. Of course you can also enter a word in English for a Polish translation. If there are too many results in the Polish-English dictionary you can try the different filters. The filters will refine your search for Polish-English by region, style, grammar and more.
        </p>
        <h2 className="mt-2 text-xl font-medium text-[#1f1f1f]">Search the Polish dictionary by letter</h2>
        <p className="mt-[10px] w-[820px]">
          Are you unsure about how to spell a Polish word and are unable to find it by searching? Use the letters below to get a complete list of Polish words with translations found in the Polish-English dictionary. Once you find the fitting Polish word, you can click on it to be taken to that page in the dictionary.
        </p>
        <ul className="mt-[11px] -mb-px flex w-[820px] flex-wrap leading-[48px] text-[#0077cf]">
          {letters.map((l) => (
            <li key={l}>
              <a href="#" className="block px-[10px]">{l}</a>
            </li>
          ))}
        </ul>
      </article>
    </div>
  );
}

function IeWindow() {
  return (
    <section className="absolute top-0 left-[260px] flex w-[1393px] flex-col overflow-hidden border border-t-0 border-white bg-white">
      <IeChrome />
      <div className="flex">
        <BablaPage />
        <div className="flex w-[21px] flex-col items-center bg-[#f0f0f0] pt-[15px] text-[#606060]">
          <Chevron className="w-4" up w={3.500} />
          <div className="mt-2 h-[124px] w-[19px] bg-[#cdcdcd]" />
          <Chevron className="mt-auto mb-4 w-4" w={3.500} />
        </div>
      </div>
    </section>
  );
}

/* ---------- taskbar ---------- */

function Taskbar({ small, children }: { small?: boolean; children: ReactNode }) {
  const glyph = small ? "size-[17px]" : "size-5";
  const logo = small ? "size-[23px]" : "size-[29px]";
  const sys = small ? "flex w-12 items-center justify-center" : "flex w-[60px] items-center justify-center";
  const apps: { name: string; icon: ReactNode; active?: boolean }[] = [
    { name: "Chrome", icon: <ChromeLogo className={logo} /> },
    { name: "File Explorer", icon: <ExplorerLogo className={logo} /> },
    { name: "Outlook", icon: <OutlookLogo className={logo} /> },
    { name: "Internet Explorer", icon: <IeLogo className={logo} />, active: true },
    { name: "Skype", icon: <SkypeLogo className={logo} /> },
    { name: "UiPath Assistant", icon: <UiLogo className={logo} /> },
    { name: "UiPath Studio", icon: <UiLogo className={logo} light /> },
  ];
  return (
    <footer className={`flex shrink-0 items-stretch bg-[#090909] text-white ${SEGOE} ${small ? "h-10" : "h-[50px]"}`}>
      <button aria-label="Start" className={sys}><WindowsLogo className={glyph} /></button>
      <button aria-label="Search" className={sys}><SearchLoop className={glyph} /></button>
      <button aria-label="Task view" className={sys}><TaskView className={glyph} /></button>
      <div className={`flex gap-px ${small ? "ml-[3px]" : "ml-1"}`}>
        {apps.map((a) => (
          <button
            key={a.name}
            aria-label={a.name}
            className={`flex flex-col items-center ${small ? "w-12" : "w-[61px]"} ${a.active ? "bg-[#3b3b3b]" : ""}`}
          >
            <span className="flex flex-1 items-center pt-[2px]">{a.icon}</span>
            <span className={`bg-[#76b9ed] ${small ? "h-[2px]" : "h-[3px]"} ${a.active ? "w-full" : small ? "w-10" : "w-[51px]"}`} />
          </button>
        ))}
      </div>
      {children}
    </footer>
  );
}

function Tray() {
  return (
    <div className="ml-auto flex items-center text-sm">
      <svg viewBox="0 0 20 20" className="size-5" fill="none" stroke="currentColor" strokeWidth="1.500">
        <circle cx="13.500" cy="4" r="3.200" />
        <circle cx="6.500" cy="10.500" r="3" />
        <path d="M9.500 9c2-2 7-2 8.500 3M1 19c1-7 10-7 11 0" />
      </svg>
      <Chevron className="ml-6 w-4" up w={1.500} />
      <svg viewBox="0 0 20 14" className="ml-3 w-5" fill="none" stroke="currentColor" strokeWidth="1.200">
        <path d="M5 3h13v10H4V8M18.800 6v4M1.500 0v2M4.500 0v2M.8 2.500h4.400v2.500L3 7 .8 5zM3 7v4" />
        <path d="M6.500 4.500h10v7h-11V8z" fill="currentColor" stroke="none" />
      </svg>
      <svg viewBox="0 0 20 16" className="ml-[10px] w-5" fill="none" stroke="currentColor" strokeWidth="1.200">
        <path d="M.6 5h3L7 1.500v13L3.600 11h-3zM10 6c1 1 1 3 0 4M13 4c2 2 2 6 0 8" />
        <path d="M16 1c3.500 4 3.500 10 0 14" stroke="#777" />
      </svg>
      <svg viewBox="0 0 16 18" className="ml-3 w-4" fill="none" stroke="currentColor" strokeWidth="1.200">
        <path d="M1 17C1 8 7 1 15 1M4.500 17C4.500 10 9 5 15 5M8 17c0-5 3-8 7-8M11 17c0-2 1.500-4 4-4" />
        <circle cx="14" cy="16" r="1.300" fill="currentColor" />
      </svg>
      <span className="ml-[15px]">POL</span>
      <time className="ml-[18px] text-center leading-[23px]">
        11:39
        <br />
        2020-02-10
      </time>
      <button aria-label="Notifications" className="relative ml-[22px] h-5 w-[46px]">
        <svg viewBox="0 0 20 20" className="size-5">
          <path d="M0 0h20v15H9l-5 5v-5H0z" fill="#fff" />
          <path d="M4 4h12M4 7.500h12M4 11h8" stroke="#090909" strokeWidth="1.400" />
        </svg>
        <span className="absolute top-[9px] left-[9px] flex size-5 items-center justify-center rounded-full border border-[#999] bg-[#333] text-xs">11</span>
      </button>
      <span className="mr-1 h-full w-px bg-[#4c4c4c]" />
    </div>
  );
}

export default function App() {
  return (
    <div className="flex min-h-screen bg-black">
      <div className="relative flex h-screen w-1/2 flex-col overflow-hidden">
        <ChromeWindow />
        <IeWindow />
        <Taskbar>
          <Tray />
        </Taskbar>
      </div>
      <div className="flex h-screen w-1/2 flex-col justify-end">
        <Taskbar small>
          <time className="mt-px mr-[6px] ml-auto self-center text-center text-[11px] leading-[18px]">
            11:39
            <br />
            2020-02-10
          </time>
        </Taskbar>
      </div>
    </div>
  );
}
